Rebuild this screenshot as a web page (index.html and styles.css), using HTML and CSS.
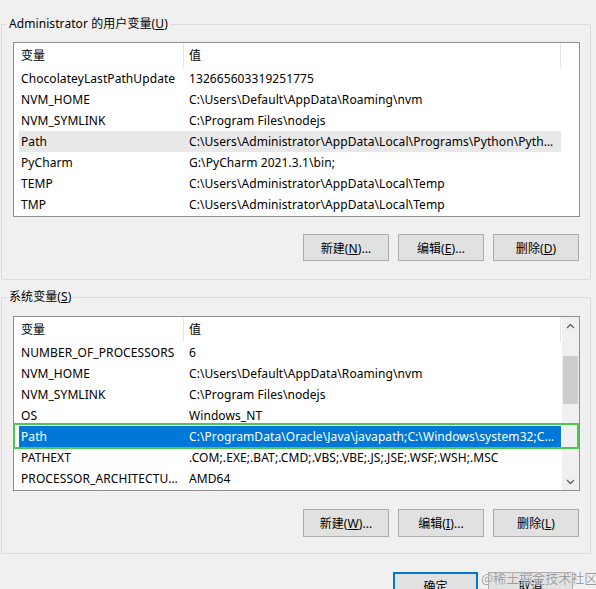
FILE: index.html
```html
<!DOCTYPE html>
<html lang="zh-CN">
<head>
<meta charset="utf-8">
<title>环境变量</title>
<link rel="stylesheet" href="styles.css">
</head>
<body>
<section class="group group-user">
  <div class="group-title">Administrator 的用户变量(<u>U</u>)</div>
  <div class="list">
    <div class="list-main">
      <div class="list-head"><div class="hcol hcol-name">变量</div><div class="hcol hcol-value">值</div></div>
      <div class="row"><span class="c-name">ChocolateyLastPathUpdate</span><span class="c-value">132665603319251775</span></div>
      <div class="row"><span class="c-name">NVM_HOME</span><span class="c-value">C:\Users\Default\AppData\Roaming\nvm</span></div>
      <div class="row"><span class="c-name">NVM_SYMLINK</span><span class="c-value">C:\Program Files\nodejs</span></div>
      <div class="row hover"><span class="c-name">Path</span><span class="c-value">C:\Users\Administrator\AppData\Local\Programs\Python\Python310\Scripts\;C:\Users\Administrator\AppData\Local\Programs\Python\Python310\</span></div>
      <div class="row"><span class="c-name">PyCharm</span><span class="c-value">G:\PyCharm 2021.3.1\bin;</span></div>
      <div class="row"><span class="c-name">TEMP</span><span class="c-value">C:\Users\Administrator\AppData\Local\Temp</span></div>
      <div class="row"><span class="c-name">TMP</span><span class="c-value">C:\Users\Administrator\AppData\Local\Temp</span></div>
    </div>
  </div>
  <div class="btns">
    <button class="btn">新建(<u>N</u>)...</button>
    <button class="btn">编辑(<u>E</u>)...</button>
    <button class="btn">删除(<u>D</u>)</button>
  </div>
</section>

<section class="group group-system">
  <div class="group-title">系统变量(<u>S</u>)</div>
  <div class="list">
    <div class="list-main">
      <div class="list-head"><div class="hcol hcol-name">变量</div><div class="hcol hcol-value">值</div></div>
      <div class="row"><span class="c-name">NUMBER_OF_PROCESSORS</span><span class="c-value">6</span></div>
      <div class="row"><span class="c-name">NVM_HOME</span><span class="c-value">C:\Users\Default\AppData\Roaming\nvm</span></div>
      <div class="row"><span class="c-name">NVM_SYMLINK</span><span class="c-value">C:\Program Files\nodejs</span></div>
      <div class="row"><span class="c-name">OS</span><span class="c-value">Windows_NT</span></div>
      <div class="row selected"><span class="c-name">Path</span><span class="c-value">C:\ProgramData\Oracle\Java\javapath;C:\Windows\system32;C:\Windows;C:\Windows\System32\Wbem</span></div>
      <div class="row"><span class="c-name">PATHEXT</span><span class="c-value">.COM;.EXE;.BAT;.CMD;.VBS;.VBE;.JS;.JSE;.WSF;.WSH;.MSC</span></div>
      <div class="row"><span class="c-name">PROCESSOR_ARCHITECTURE</span><span class="c-value">AMD64</span></div>
    </div>
    <div class="scrollbar">
      <div class="sb-btn"><svg width="9" height="6" viewBox="0 0 9 6"><polyline points="1,5 4.5,1.5 8,5" fill="none" stroke="#606060" stroke-width="1.3"/></svg></div>
      <div class="sb-thumb"></div>
      <div class="sb-spacer"></div>
      <div class="sb-btn"><svg width="9" height="6" viewBox="0 0 9 6"><polyline points="1,1 4.5,4.5 8,1" fill="none" stroke="#606060" stroke-width="1.3"/></svg></div>
    </div>
  </div>
  <div class="btns">
    <button class="btn">新建(<u>W</u>)...</button>
    <button class="btn">编辑(<u>I</u>)...</button>
    <button class="btn">删除(<u>L</u>)</button>
  </div>
</section>

<div class="footer">
  <button class="btn btn-footer btn-default">确定</button>
  <button class="btn btn-footer">取消</button>
</div>

<div class="watermark">@稀土掘金技术社区</div>
</body>
</html>
```

FILE: styles.css
```css
* { box-sizing: border-box; }
html, body { margin: 0; }
body {
  background: #f0f0f0;
  font-family: "Noto Sans", "Noto Sans CJK SC", sans-serif;
  font-size: 12px;
  letter-spacing: 0.08px;
  color: #000;
  width: 596px;
  height: 589px;
  overflow: hidden;
  position: relative;
  padding-top: 24px;
}
u { text-decoration: underline; text-underline-offset: 1px; }

.group {
  border: 1px solid #dcdcdc;
  margin-left: 1px;
  width: 590px;
  padding: 0 10px 18px 11px;
}
.group-system {
  margin-top: 17px;
  padding-bottom: 16px;
}
.group-title {
  width: fit-content;
  margin: -9px 0 0 -6px;
  padding: 0 2px;
  background: #f0f0f0;
  line-height: 16px;
  white-space: nowrap;
}

.list {
  margin-top: 10px;
  width: 567px;
  height: 175px;
  border: 1px solid #8f8f8f;
  background: #fff;
  display: flex;
}
.group-system .list { margin-top: 11px; }
.list-main { flex: 1; min-width: 0; }

.list-head { display: flex; height: 25px; }
.hcol {
  line-height: 25px;
  border-right: 1px solid #e5e5e5;
  white-space: nowrap;
}
.hcol-name { width: 170px; padding-left: 7px; }
.hcol-value { width: 377px; padding-left: 5px; }

.row {
  display: flex;
  height: 21px;
  line-height: 21px;
  margin-left: 5px;
  width: 542px;
}
.c-name, .c-value {
  overflow: hidden;
  white-space: nowrap;
  text-overflow: ellipsis;
}
.c-name { width: 168px; padding: 0 6px 0 2px; flex: none; }
.c-value { width: 374px; padding: 0 4px 0 2px; flex: none; }
.row.hover { background: #e8e8e8; }
.row.selected {
  background: #0078d7;
  color: #fff;
  position: relative;
}
.row.selected::after {
  content: "";
  position: absolute;
  left: -6px;
  right: -18px;
  top: -3px;
  bottom: -2px;
  border: 2px solid #4cc84c;
}

.scrollbar {
  width: 17px;
  flex: none;
  background: #f0f0f0;
  display: flex;
  flex-direction: column;
  align-items: center;
}
.sb-btn {
  width: 17px;
  height: 17px;
  display: flex;
  align-items: center;
  justify-content: center;
}
.sb-thumb {
  width: 15px;
  height: 48px;
  margin-top: 22px;
  background: #cdcdcd;
}
.sb-spacer { flex: 1; }

.btns {
  display: flex;
  justify-content: flex-end;
  gap: 9px;
  margin-top: 17px;
  padding-right: 1px;
}
.group-system .btns { margin-top: 18px; }
.btn {
  width: 86px;
  height: 27px;
  padding: 0;
  border: 1px solid #adadad;
  background: #e1e1e1;
  font-family: inherit;
  font-size: 12px;
  letter-spacing: inherit;
  color: #000;
}
.group-system .btn { height: 28px; }

.footer {
  display: flex;
  justify-content: flex-end;
  gap: 10px;
  margin-top: 18px;
  padding-right: 23px;
}
.btn-footer { width: 85px; height: 27px; }
.btn-default {
  border: 1px solid #0078d7;
  box-shadow: inset 0 0 0 1px #0078d7;
}

.watermark {
  position: absolute;
  left: 481px;
  top: 569px;
  font-family: "Noto Sans CJK SC", sans-serif;
  font-size: 13px;
  line-height: 18px;
  letter-spacing: 0;
  color: rgba(140, 140, 140, 0.85);
  text-shadow: 0 0 1px #fff;
  white-space: nowrap;
}
```
